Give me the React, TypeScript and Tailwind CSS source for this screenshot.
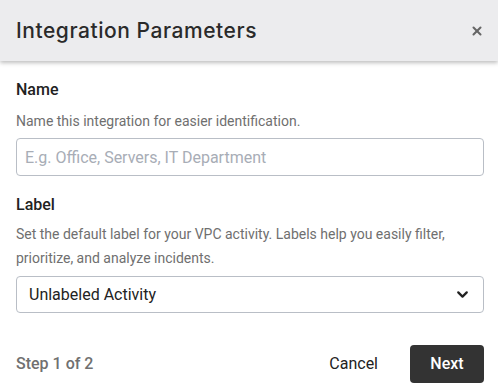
import { X, ChevronDown } from 'lucide-react';

export default function App() {
  return (
    <div className="flex h-[391px] w-[498px] flex-col bg-white font-['Roboto',sans-serif] text-[#222]">
      {/* Header */}
      <header className="relative z-10 flex h-[61px] shrink-0 items-center justify-between bg-[#ececee] pl-4 pr-[14px] shadow-[0_2px_4px_rgba(0,0,0,0.25)]">
        <h1 className="font-['Inter',sans-serif] text-[21px] font-medium tracking-[0.55px] text-[#2a2a2a]">
          Integration Parameters
        </h1>
        <button className="text-[#666]" title="Close">
          <X className="h-[14px] w-[14px]" strokeWidth={3.5} />
        </button>
      </header>

      {/* Body */}
      <main className="flex flex-1 flex-col pl-4 pr-[14px] pt-[19px]">
        <div className="text-[16px] font-medium leading-5 text-[#222]">Name</div>
        <p className="mt-[11px] text-[14px] leading-5 text-[#6f6f6f]">
          Name this integration for easier identification.
        </p>
        <input
          placeholder="E.g. Office, Servers, IT Department"
          className="mt-[7px] h-[38px] w-full rounded-[4px] border border-[#b9bec6] px-2 text-[16px] text-[#222] placeholder:text-[#a8adb6] focus:outline-none"
        />

        <div className="mt-[19px] text-[16px] font-medium leading-5 text-[#222]">Label</div>
        <p className="mt-[7px] text-[14px] leading-6 text-[#6f6f6f]">
          Set the default label for your VPC activity. Labels help you easily filter, prioritize, and analyze incidents.
        </p>
        <button className="mt-[6px] flex h-[37px] w-full items-center justify-between rounded-[4px] border border-[#b9bec6] pl-3 pr-[12px] text-left text-[16px] text-[#222]">
          <span>Unlabeled Activity</span>
          <ChevronDown className="h-[17px] w-[17px] text-[#222]" strokeWidth={3.2} />
        </button>
      </main>

      {/* Footer */}
      <footer className="flex items-center justify-between pb-2 pl-4 pr-[14px]">
        <span className="text-[16px] font-medium text-[#707070]">Step 1 of 2</span>
        <div className="flex items-center gap-[32px]">
          <button className="text-[16px] text-[#222]">Cancel</button>
          <button className="h-[38px] w-[74px] rounded-[4px] bg-[#333333] text-[16px] font-medium text-white">
            Next
          </button>
        </div>
      </footer>
    </div>
  );
}
